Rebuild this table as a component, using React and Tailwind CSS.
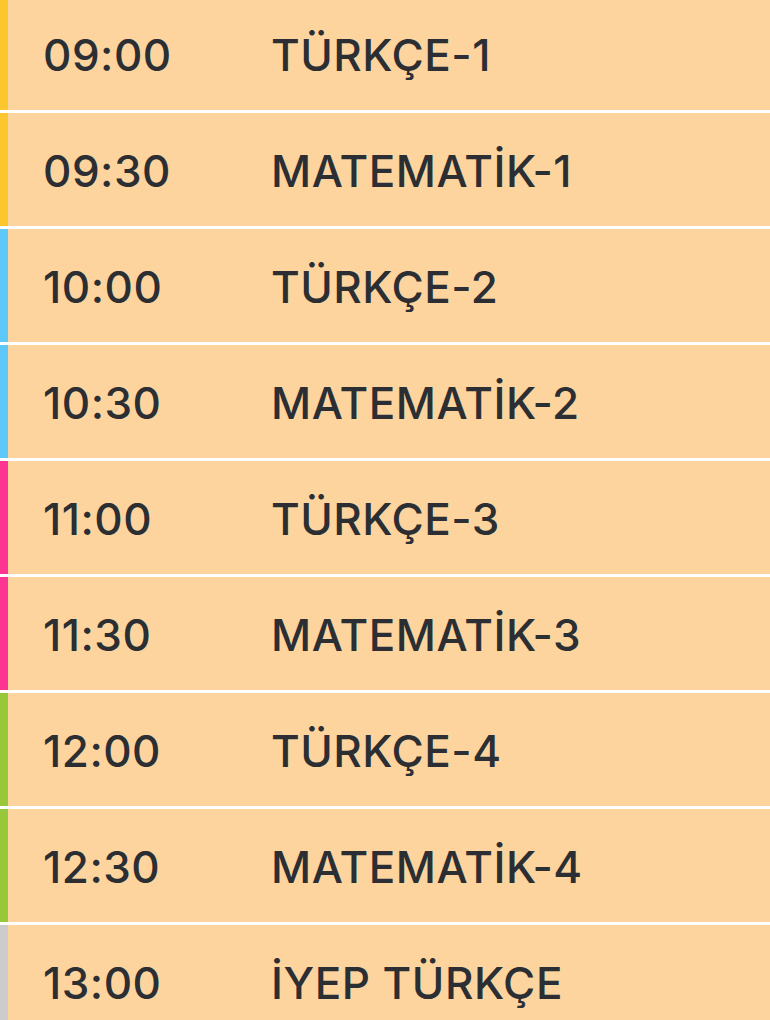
const rows = [
  { time: "09:00", subject: "TÜRKÇE-1", bar: "bg-[#fcc72e]" },
  { time: "09:30", subject: "MATEMATİK-1", bar: "bg-[#fcc72e]" },
  { time: "10:00", subject: "TÜRKÇE-2", bar: "bg-[#5ec8f8]" },
  { time: "10:30", subject: "MATEMATİK-2", bar: "bg-[#5ec8f8]" },
  { time: "11:00", subject: "TÜRKÇE-3", bar: "bg-[#fc3592]" },
  { time: "11:30", subject: "MATEMATİK-3", bar: "bg-[#fc3592]" },
  { time: "12:00", subject: "TÜRKÇE-4", bar: "bg-[#97c83a]" },
  { time: "12:30", subject: "MATEMATİK-4", bar: "bg-[#97c83a]" },
  { time: "13:00", subject: "İYEP TÜRKÇE", bar: "bg-[#cccccc]" },
];

export default function App() {
  return (
    <div className="h-[1020px] w-[770px] overflow-hidden bg-white font-['Inter',sans-serif]">
      {/* schedule list, first row is cut at the top */}
      <div className="-mt-[3px] flex flex-col gap-[3px]">
        {rows.map((r) => (
          <div key={r.time} className="flex h-[113px] shrink-0 bg-[#fdd49e]">
            <div className={`w-[8px] shrink-0 ${r.bar}`} />
            <div className="flex flex-1 items-center pt-[3px] text-[44px] font-medium leading-none tracking-[0.5px] text-[#2b2e33]">
              <span className="w-[263px] pl-[35px]">{r.time}</span>
              <span>{r.subject}</span>
            </div>
          </div>
        ))}
      </div>
    </div>
  );
}
